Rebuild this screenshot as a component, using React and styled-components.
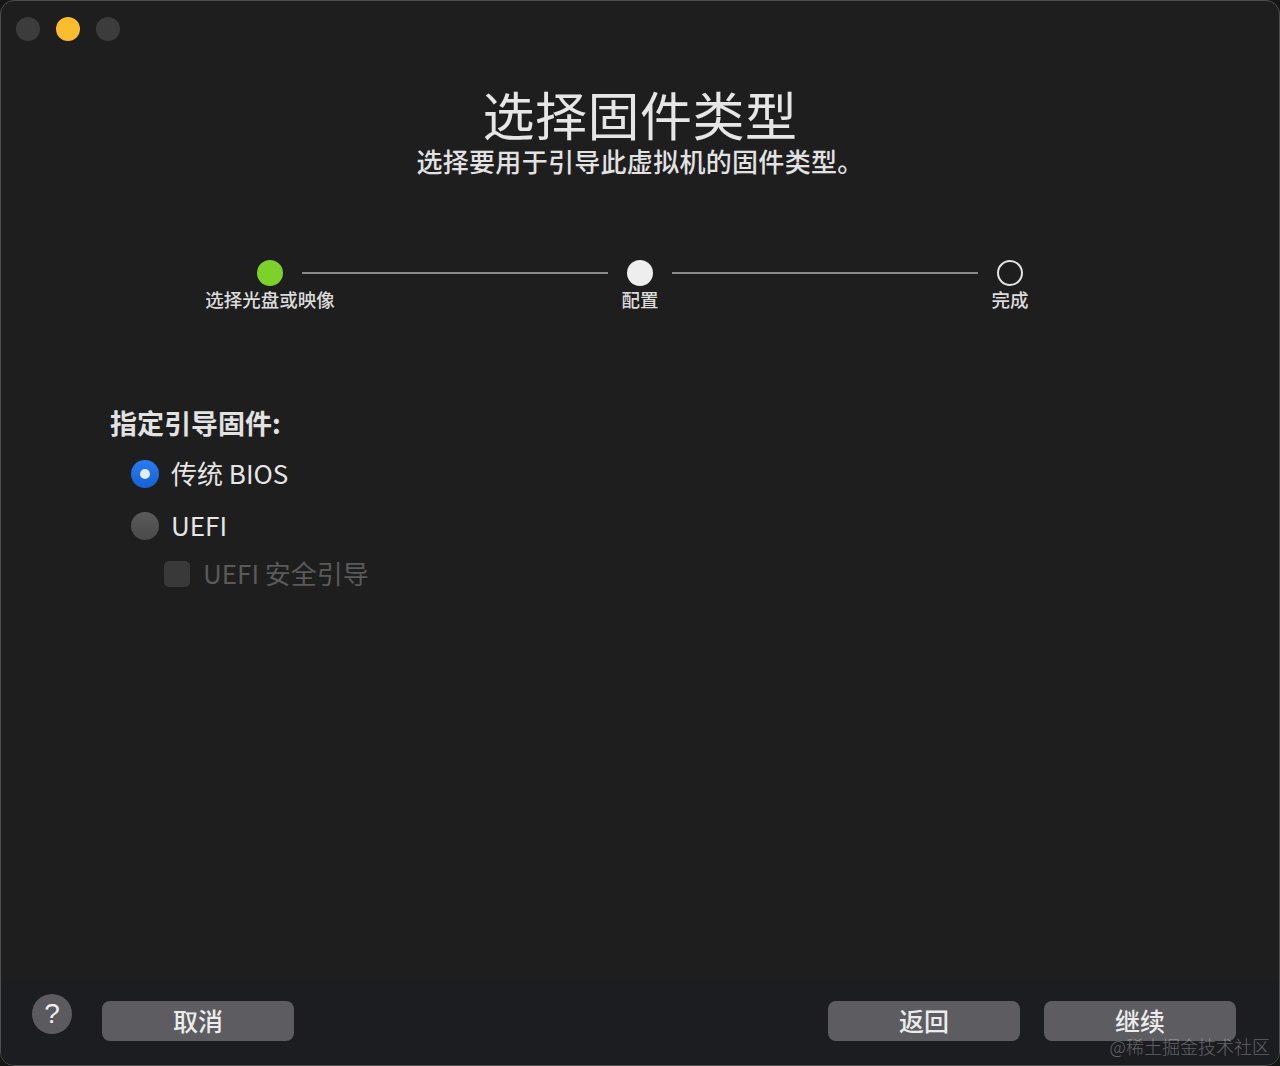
import styled, { createGlobalStyle } from 'styled-components';

const GlobalStyle = createGlobalStyle`
  html, body {
    margin: 0;
    padding: 0;
    background: #161616;
  }
  body {
    font-family: "Noto Sans CJK SC", "Noto Sans", sans-serif;
    -webkit-font-smoothing: antialiased;
  }
  * { box-sizing: border-box; }
`;

const Window = styled.div`
  position: relative;
  width: 1280px;
  height: 1066px;
  display: flex;
  flex-direction: column;
  background: #1e1e1e;
  border: 1px solid #4e4e4e;
  border-radius: 14px;
  overflow: hidden;
`;

const TitleBar = styled.div`
  height: 56px;
  display: flex;
  align-items: center;
  gap: 16px;
  padding-left: 15px;
`;

const Light = styled.span`
  width: 24px;
  height: 24px;
  border-radius: 50%;
  background: ${({ $color }) => $color};
`;

const Content = styled.main`
  flex: 1;
  display: flex;
  flex-direction: column;
`;

const Header = styled.header`
  display: flex;
  flex-direction: column;
  align-items: center;
  padding-top: 28px;
  color: #e6e6e6;
`;

const Title = styled.h1`
  margin: 0;
  font-size: 52px;
  line-height: 58px;
  font-weight: 400;
  letter-spacing: 0.5px;
`;

const Subtitle = styled.p`
  margin: 2px 0 0;
  font-size: 26px;
  line-height: 32px;
  font-weight: 500;
  letter-spacing: 0.3px;
  color: #e2e2e2;
`;

const Stepper = styled.div`
  display: flex;
  justify-content: center;
  margin-top: 83px;
`;

const Step = styled.div`
  width: 64px;
  display: flex;
  flex-direction: column;
  align-items: center;
`;

const Dot = styled.span`
  width: 26px;
  height: 26px;
  border-radius: 50%;
  background: ${({ $state }) =>
    $state === 'done' ? '#7cd22a' : $state === 'current' ? '#eeeeee' : 'transparent'};
  border: ${({ $state }) => ($state === 'todo' ? '2px solid #e4e4e4' : 'none')};
`;

const StepLabel = styled.span`
  margin-top: 1px;
  font-size: 18.5px;
  line-height: 24px;
  font-weight: 500;
  color: #dcdcdc;
  white-space: nowrap;
`;

const Line = styled.span`
  width: 306px;
  height: 2px;
  margin-top: 12px;
  background: #8a8a8a;
`;

const Form = styled.section`
  display: flex;
  flex-direction: column;
  padding-left: 109px;
  margin-top: 95px;
`;

const Legend = styled.div`
  font-size: 27px;
  line-height: 34px;
  font-weight: 700;
  color: #e2e2e2;
`;

const Options = styled.div`
  display: flex;
  flex-direction: column;
  padding-left: 21px;
  margin-top: 14px;
`;

const Option = styled.label`
  height: ${({ $compact }) => ($compact ? '36px' : '40px')};
  margin-top: ${({ $gap }) => $gap || 0}px;
  padding-left: ${({ $indent }) => $indent || 0}px;
  display: flex;
  align-items: center;
  gap: ${({ $compact }) => ($compact ? '13px' : '12px')};
  font-size: 26px;
  line-height: 34px;
  font-weight: 400;
  color: ${({ $disabled }) => ($disabled ? '#5a5a5a' : '#e6e6e6')};
`;

const OptionText = styled.span`
  margin-top: -3px;
`;

const Radio = styled.span`
  width: 28px;
  height: 28px;
  border-radius: 50%;
  display: flex;
  align-items: center;
  justify-content: center;
  background: ${({ $checked }) =>
    $checked ? 'linear-gradient(#2a7cf0, #1560d4)' : 'linear-gradient(#5a5a5a, #4a4a4a)'};
  &::after {
    content: '';
    width: 10px;
    height: 10px;
    border-radius: 50%;
    background: #e4ecff;
    display: ${({ $checked }) => ($checked ? 'block' : 'none')};
  }
`;

const Checkbox = styled.span`
  width: 26px;
  height: 26px;
  border-radius: 5px;
  background: #393939;
`;

const Footer = styled.footer`
  height: 86px;
  display: flex;
  align-items: flex-start;
  padding: 15px 43px 0 31px;
  background: #1c1d21;
`;

const HelpButton = styled.button`
  width: 40px;
  height: 40px;
  border-radius: 50%;
  border: none;
  padding: 0;
  background: #5b5b5f;
  color: #f0f0f0;
  font-family: "Liberation Sans", sans-serif;
  font-size: 28px;
  line-height: 40px;
`;

const Button = styled.button`
  width: 192px;
  height: 40px;
  margin-top: 7px;
  margin-left: ${({ $gap }) => $gap}px;
  border: none;
  border-radius: 8px;
  background: #5c5c61;
  color: #ececec;
  font-family: "Noto Sans CJK SC", sans-serif;
  font-size: 25px;
  font-weight: 500;
  line-height: 36px;
  padding: 0 0 2px;
`;

const Spacer = styled.div`
  flex: 1;
`;

const Watermark = styled.span`
  position: absolute;
  right: 9px;
  bottom: 7px;
  font-size: 18px;
  line-height: 24px;
  color: rgba(255, 255, 255, 0.32);
  font-family: "Noto Sans CJK SC", sans-serif;
  font-weight: 300;
`;

const steps = [
  { label: '选择光盘或映像', state: 'done' },
  { label: '配置', state: 'current' },
  { label: '完成', state: 'todo' },
];

export default function App() {
  return (
    <>
      <GlobalStyle />
      <Window>
        <TitleBar>
          <Light $color="#3c3c3c" />
          <Light $color="#fbbd2e" />
          <Light $color="#3c3c3c" />
        </TitleBar>

        <Content>
          <Header>
            <Title>选择固件类型</Title>
            <Subtitle>选择要用于引导此虚拟机的固件类型。</Subtitle>
          </Header>

          <Stepper>
            {steps.map((s, i) => (
              <>
                {i > 0 && <Line key={`l${i}`} />}
                <Step key={s.label}>
                  <Dot $state={s.state} />
                  <StepLabel>{s.label}</StepLabel>
                </Step>
              </>
            ))}
          </Stepper>

          <Form>
            <Legend>指定引导固件:</Legend>
            <Options>
              <Option>
                <Radio $checked />
                <OptionText>传统 BIOS</OptionText>
              </Option>
              <Option $gap={12}>
                <Radio />
                <OptionText>UEFI</OptionText>
              </Option>
              <Option $compact $disabled $gap={10} $indent={33}>
                <Checkbox />
                <OptionText>UEFI 安全引导</OptionText>
              </Option>
            </Options>
          </Form>
        </Content>

        <Footer>
          <HelpButton>?</HelpButton>
          <Button $gap={30}>取消</Button>
          <Spacer />
          <Button $gap={0}>返回</Button>
          <Button $gap={24}>继续</Button>
        </Footer>

        <Watermark>@稀土掘金技术社区</Watermark>
      </Window>
    </>
  );
}
